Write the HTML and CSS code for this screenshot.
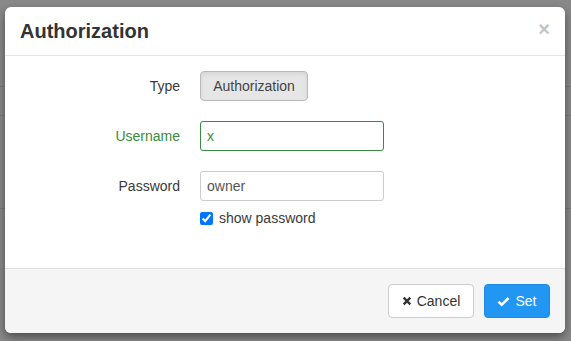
FILE: index.html
```html
<!DOCTYPE html>
<html>
<head>
<meta charset="utf-8">
<link rel="stylesheet" href="styles.css">
</head>
<body>
<div class="backdrop">
  <div class="modal">
    <div class="modal-header">
      <h4 class="modal-title">Authorization</h4>
      <span class="close">&times;</span>
    </div>
    <div class="modal-body">
      <div class="row">
        <label class="label">Type</label>
        <div class="field"><button class="btn btn-type">Authorization</button></div>
      </div>
      <div class="row success">
        <label class="label">Username</label>
        <div class="field"><input class="input input-success" type="text" value="x"></div>
      </div>
      <div class="row">
        <label class="label">Password</label>
        <div class="field"><input class="input" type="text" value="owner"></div>
      </div>
      <div class="row row-check">
        <span></span>
        <label class="check"><input type="checkbox" checked> show password</label>
      </div>
    </div>
    <div class="modal-footer">
      <button class="btn btn-default">
        <svg class="ic" viewBox="0 0 12 12" width="10" height="10"><path d="M2 2 L10 10 M10 2 L2 10" stroke="#333" stroke-width="2.8" stroke-linecap="butt"/></svg>
        Cancel</button>
      <button class="btn btn-primary">
        <svg class="ic" viewBox="0 0 14 12" width="13" height="11"><path d="M1.5 6.2 L5 9.6 L12.5 2.2" fill="none" stroke="#fff" stroke-width="2.8"/></svg>
        Set</button>
    </div>
  </div>
</div>
</body>
</html>
```
FILE: styles.css
```css
html, body {
  margin: 0;
  padding: 0;
}
body {
  width: 571px;
  height: 341px;
  overflow: hidden;
  font-family: "Liberation Sans", Arial, sans-serif;
  font-size: 14px;
  color: #333;
  background:
    linear-gradient(#7b7b7b, #7b7b7b) 0 86px / 100% 1px no-repeat,
    linear-gradient(#7b7b7b, #7b7b7b) 0 115px / 100% 1px no-repeat,
    linear-gradient(#7b7b7b, #7b7b7b) 0 208px / 100% 1px no-repeat,
    #898989;
}
.backdrop {
  padding: 7px 6px 0 5px;
}
.modal {
  width: 560px;
  background: #fff;
  border-radius: 6px;
  box-shadow: 0 4px 10px rgba(0, 0, 0, 0.45);
  overflow: hidden;
}
.modal-header {
  display: flex;
  align-items: center;
  justify-content: space-between;
  padding: 12px 15px 11px 15px;
  border-bottom: 1px solid #e5e5e5;
}
.modal-title {
  margin: 0;
  font-size: 20px;
  line-height: 25px;
  font-weight: bold;
  color: #333;
}
.close {
  font-size: 20px;
  font-weight: bold;
  line-height: 20px;
  color: #c4c4c4;
  margin-top: -6px;
}
.modal-body {
  padding: 15px 0 40px;
}
.row {
  display: grid;
  grid-template-columns: 175px 184px;
  column-gap: 20px;
  align-items: center;
  margin-bottom: 20px;
  height: 30px;
}
.row-check {
  height: 20px;
  margin-top: -13px;
  margin-bottom: 0;
}
.label {
  text-align: right;
  color: #3a3a3a;
}
.success .label {
  color: #3c8a3f;
}
.field {
  display: flex;
}
.input {
  box-sizing: border-box;
  width: 184px;
  height: 30px;
  padding: 4px 6px;
  border: 1px solid #ccc;
  border-radius: 3px;
  font-family: "Liberation Sans", Arial, sans-serif;
  font-size: 14px;
  color: #555;
  outline: none;
}
.input-success {
  border-color: #3c8a3f;
  color: #3c8a3f;
}
.check {
  display: flex;
  align-items: center;
  gap: 6px;
  color: #3a3a3a;
}
.check input {
  margin: 0;
  width: 13px;
  height: 13px;
  accent-color: #0075ff;
}
.btn {
  box-sizing: border-box;
  display: inline-flex;
  align-items: center;
  justify-content: center;
  gap: 5px;
  height: 34px;
  padding: 0 12px;
  border: 1px solid #ccc;
  border-radius: 4px;
  font-family: "Liberation Sans", Arial, sans-serif;
  font-size: 14px;
  background: #fff;
  color: #333;
}
.btn-type {
  width: 108px;
  height: 30px;
  padding: 0;
  background: #e6e6e6;
  border-color: #b9b9b9;
  box-shadow: inset 0 2px 4px rgba(0, 0, 0, 0.08);
  color: #444;
}
.modal-footer {
  display: flex;
  justify-content: flex-end;
  gap: 10px;
  padding: 15px 15px 15px;
  background: #f5f5f5;
  border-top: 1px solid #e0e0e0;
}
.btn-default {
  width: 86px;
  background: #fff;
  border-color: #ccc;
}
.btn-primary {
  width: 66px;
  background: #2196f3;
  border-color: #1e8ae6;
  color: #fff;
}
.ic {
  display: block;
}
```
